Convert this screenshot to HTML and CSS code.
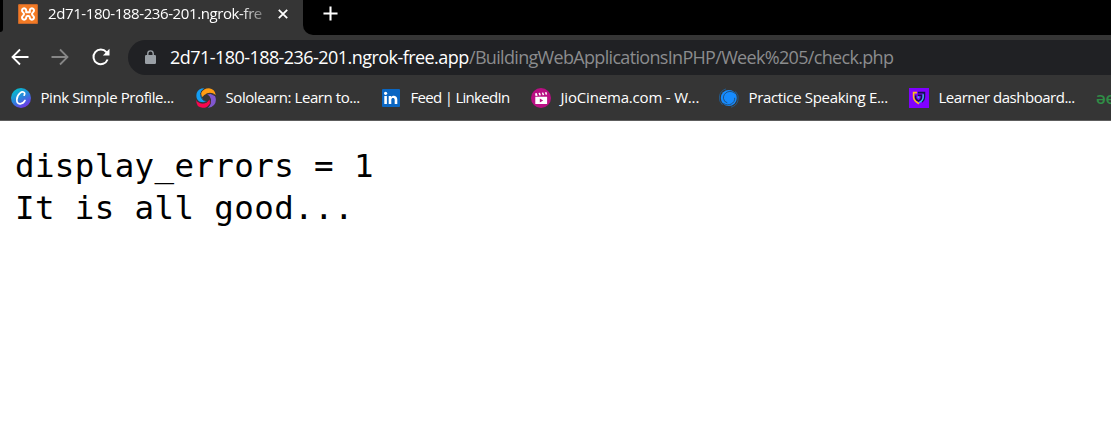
FILE: index.html
```html
<!DOCTYPE html>
<html lang="en">
<head>
<meta charset="utf-8">
<title>check.php</title>
<link rel="stylesheet" href="styles.css">
</head>
<body>
<header class="browser">
  <div class="tabstrip">
    <div class="edge"></div>
    <div class="tab">
      <svg class="icon" viewBox="0 0 20 20"><rect width="20" height="20" rx="1.5" fill="#f37a24"/><rect x=".5" y=".5" width="19" height="19" rx="1.5" fill="none" stroke="#c8682c"/><path d="M8.2 8.2V6.4A2.1 2.1 0 1 0 4.9 8.2Q6.2 9.2 6 10Q6 10.8 4.9 11.8A2.1 2.1 0 1 0 8.2 13.6Q8.2 12 9.4 12H10.6Q11.8 12 11.8 13.6A2.1 2.1 0 1 0 15.1 11.8Q14 10.8 14 10Q13.8 9.2 15.1 8.2A2.1 2.1 0 1 0 11.8 6.4V8.2Z" fill="none" stroke="#fff" stroke-width="2" stroke-linejoin="round"/></svg>
      <span class="tab-title">2d71-180-188-236-201.ngrok-fre</span>
      <svg class="close" viewBox="0 0 10 10"><path d="M.8.8l8.4 8.4M9.2.8L.8 9.2" stroke="#fff" stroke-width="1.8"/></svg>
    </div>
    <div class="strip-rest">
      <svg class="plus" viewBox="0 0 16 16"><path d="M8 .5v15M.5 8h15" stroke="#fff" stroke-width="2.2"/></svg>
    </div>
  </div>
  <div class="toolbar">
    <svg class="nav" viewBox="0 0 20 20"><path d="M18.5 10H3M10 2.5L2.5 10l7.5 7.5" fill="none" stroke="#fff" stroke-width="1.8"/></svg>
    <svg class="nav" viewBox="0 0 20 20"><path d="M1.5 10H17M10 2.5l7.5 7.5-7.5 7.5" fill="none" stroke="#868686" stroke-width="1.8"/></svg>
    <svg class="nav" viewBox="0 0 20 20"><path d="M17.6 12.5A7.3 7.3 0 1 1 16.4 5.2L17.5 6.8" fill="none" stroke="#fff" stroke-width="2"/><path d="M19.5 1.8V8.4H12.9Z" fill="#fff"/></svg>
    <div class="address">
      <svg class="lock" viewBox="0 0 11 14"><path d="M2.8 6V3.6a2.7 2.7 0 0 1 5.4 0V6" fill="none" stroke="#9aa0a6" stroke-width="1.4"/><rect y="5" width="11" height="9" rx="1.2" fill="#9aa0a6"/></svg>
      <span class="host">2d71-180-188-236-201.ngrok-free.app</span><span class="path">/BuildingWebApplicationsInPHP/Week%205/check.php</span>
    </div>
  </div>
  <nav class="bookmarks">
    <a class="bm canva"><svg class="icon" viewBox="0 0 20 20"><defs><linearGradient id="cg" x1=".2" y1="0" x2=".8" y2="1"><stop offset="0" stop-color="#00c4cc"/><stop offset=".5" stop-color="#2b82dc"/><stop offset="1" stop-color="#7d2ae8"/></linearGradient></defs><circle cx="10" cy="10" r="10" fill="url(#cg)"/><path d="M13.2 7.2C15 4.2 11.6 2.9 9 5.1C5 8.4 4.5 15.6 9 15.8C11.2 15.9 13 14.3 14 12.4" fill="none" stroke="#fff" stroke-width="1.7" stroke-linecap="round"/></svg><span>Pink Simple Profile...</span></a>
    <a class="bm solo"><svg class="icon" viewBox="0 0 20 20"><path d="M8.2 .3Q2.5 .2 .7 5Q-.6 11 3.2 13.4Q7 15 11.2 13.5Q6.4 12.5 5.8 9Q5.4 6 4.4 5.6Q4.8 2.5 8.2 .3Z" fill="#149df2"/><path d="M5 5.2Q7.5.2 13 .2Q18.8 .8 19.8 7Q15.5 3.8 11.5 5.2Q7.5 6.8 6.5 9Q4.8 7.6 5 5.2Z" fill="#ff9d14"/><path d="M11 6.3Q16.2 4.8 19 8Q21.2 13 18 17Q15.2 20 11.8 19.8Q15.6 16.5 14.9 11Q14 7.4 11 6.3Z" fill="#8057cf"/><path d="M.3 12.2Q4 16 8.5 15Q12.4 13.8 13.5 11.4Q15.3 13.4 14 16.2Q11 20 6.4 19.8Q0 19 .3 12.2Z" fill="#f8074f"/><path d="M4.7 5Q3.9 11.8 10.8 13.8M19 7.7Q14.8 4.2 10.2 6.2M14.2 11Q15.8 16 11.5 19.4M1 13Q6 16.8 11 14" fill="none" stroke="#353535" stroke-width=".8"/></svg><span>Sololearn: Learn to...</span></a>
    <a class="bm feed"><svg class="icon" viewBox="0 0 20 20"><rect x="1" y="1" width="18" height="18" rx="1" fill="#0a66c2"/><path d="M3.3 8h2.6v8H3.3ZM7.7 8h2.5v1.1c1.5-2.2 6.1-1.7 6.1 2.4V16h-2.6v-4c0-2.6-3.4-2.5-3.4 0v4H7.7Z" fill="#fff"/><circle cx="4.6" cy="5.3" r="1.6" fill="#fff"/></svg><span>Feed | LinkedIn</span></a>
    <a class="bm jio"><svg class="icon" viewBox="0 0 20 20"><circle cx="10" cy="10" r="10" fill="#b90f83"/><path d="M4.3 8.8h11.8V16H4.3ZM4 5.6L5.7 5l1 2.7-2.2.3ZM7.4 5.1l1.6-.3 1 2.4-1.6.3ZM10.8 4.8l1.4-.2 1 2.4-1.5.2ZM13.9 4.4l1.6-.4.6 2.4-1.4.4Z" fill="#fff"/><path d="M8.8 10.4v4l3.4-2Z" fill="#b90f83"/></svg><span>JioCinema.com - W...</span></a>
    <a class="bm practice"><svg class="icon" viewBox="0 0 20 20"><path d="M7 .9A9.3 9.3 0 0 0 3.5 16.9M12 19.2A9.3 9.3 0 0 0 16.5 3.5" fill="none" stroke="#235c91" stroke-width=".9"/><circle cx="9.8" cy="10" r="8" fill="#168bff"/><path d="M16 5.3C11 1.2 4.2 4.5 4.4 10.2Q4.8 14 8.3 14.8M4.2 15.3C9.5 19 16.2 15.5 15.7 9.8" fill="none" stroke="#204c76" stroke-width=".9"/></svg><span>Practice Speaking E...</span></a>
    <a class="bm learner"><svg class="icon" viewBox="0 0 20 20"><rect width="20" height="20" fill="#8000ff"/><path d="M8 4.6H4.6V9c0 3 2 4.8 5.4 6.8" fill="none" stroke="#ffbd17" stroke-width="1.6"/><path d="M9 4.6h6.4V9c0 2.5-1 3.9-2.5 5" fill="none" stroke="#12154c" stroke-width="1.7"/><path d="M14.2 6.2V9c0 2.7-1.5 4.3-4.2 5.8" fill="none" stroke="#2fc5e8" stroke-width="1.3"/><path d="M6.6 7.6v2.7q.6 2 3.1 2.6 2.7-1.2 2.7-3.4V7.3H8.8" fill="none" stroke="#12154c" stroke-width="1.5"/><path d="M8.7 8.5l1.3 1.7" stroke="#2fc5e8" stroke-width="1.3"/></svg><span>Learner dashboard...</span></a>
    <a class="bm gfg">əe</a>
  </nav>
</header>
<main class="page"><pre class="output"><span>display_errors = 1</span>
<span>It is all good...</span></pre></main>
</body>
</html>
```
FILE: styles.css
```css
* { box-sizing: border-box; }
body { margin: 0; width: 1111px; height: 443px; overflow: hidden; background: #fff; color: #fff; font-family: "Open Sans", "Noto Sans", sans-serif; }
svg { display: block; flex: none; }
.browser { height: 121px; background: #353535; border-bottom: 1px solid #5d5d5d; }
.tabstrip { display: flex; height: 35px; }
.edge { width: 3px; height: 32px; background: #000; border-bottom-right-radius: 3px; }
.tab { display: flex; align-items: center; width: 300px; height: 27px; padding-left: 15px; }
.icon { width: 20px; height: 20px; }
.tab-title { width: 220px; margin-left: 10px; overflow: hidden; white-space: nowrap; font-size: 15px; line-height: 22px; padding-bottom: 2px; letter-spacing: -.4px; -webkit-mask-image: linear-gradient(90deg, #000 192px, transparent 226px); mask-image: linear-gradient(90deg, #000 192px, transparent 226px); }
.close { width: 10px; height: 10px; margin-left: 10px; }
.strip-rest { flex: 1; padding: 6px 0 0 20px; background: #000; border-bottom-left-radius: 10px; }
.plus { width: 15px; height: 15px; }
.toolbar { display: flex; align-items: center; height: 45px; padding: 0 0 1px 10px; gap: 20px; }
.nav { width: 20px; height: 20px; }
.address { display: flex; align-items: center; flex: 1; height: 35px; margin-left: -2px; padding-left: 17px; background: #202124; border-radius: 18px 0 0 18px; font-size: 18px; white-space: nowrap; }
.lock { width: 11px; height: 14px; margin-right: 14px; }
.host { width: 299px; letter-spacing: -.55px; }
.path { color: #8b8c8e; letter-spacing: -.68px; }
.bookmarks { display: flex; align-items: center; height: 36px; padding-left: 11px; }
.bm { display: flex; align-items: center; flex: none; gap: 9.5px; font-size: 15px; line-height: 20px; white-space: nowrap; letter-spacing: -.4px; }
.bm span { padding-bottom: 2px; }
.canva { width: 185px; }
.solo { width: 185px; letter-spacing: -.43px; }
.feed { width: 150px; letter-spacing: -.7px; }
.jio { width: 188px; letter-spacing: -.18px; }
.practice { width: 190px; letter-spacing: -.33px; }
.learner { width: 187px; letter-spacing: -.48px; }
.gfg { color: #2f8d46; font-weight: 600; font-size: 17px; }
.page { padding: 24px 15px; }
.output { margin: 0; color: #000; font: 32.5px/42px "DejaVu Sans Mono", monospace; letter-spacing: .37px; }
```
